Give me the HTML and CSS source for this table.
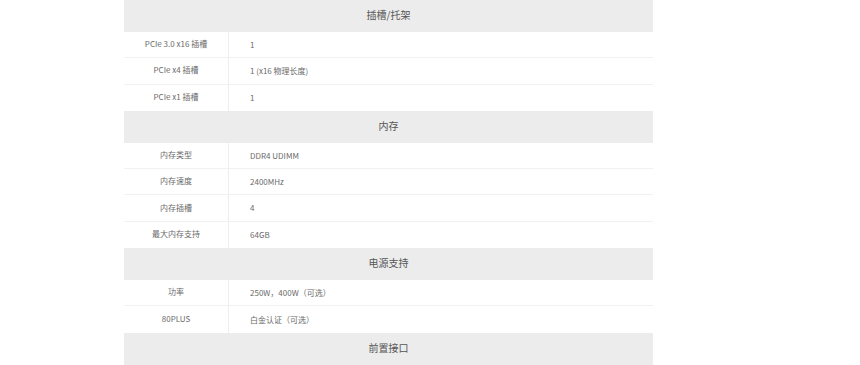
FILE: index.html
```html
<!DOCTYPE html>
<html lang="zh-CN">
<head>
<meta charset="utf-8">
<title>规格</title>
<link rel="stylesheet" href="styles.css">
</head>
<body>
<div class="spec">
  <div class="head">插槽/托架</div>
  <div class="row"><div class="label">PCIe 3.0 x16 插槽</div><div class="value">1</div></div>
  <div class="row"><div class="label">PCIe x4 插槽</div><div class="value">1 (x16 物理长度)</div></div>
  <div class="row last"><div class="label">PCIe x1 插槽</div><div class="value">1</div></div>

  <div class="head">内存</div>
  <div class="row"><div class="label">内存类型</div><div class="value">DDR4 UDIMM</div></div>
  <div class="row"><div class="label">内存速度</div><div class="value">2400MHz</div></div>
  <div class="row"><div class="label">内存插槽</div><div class="value">4</div></div>
  <div class="row last"><div class="label">最大内存支持</div><div class="value">64GB</div></div>

  <div class="head">电源支持</div>
  <div class="row"><div class="label">功率</div><div class="value">250W，400W（可选）</div></div>
  <div class="row last"><div class="label">80PLUS</div><div class="value">白金认证（可选）</div></div>

  <div class="head">前置接口</div>
</div>
</body>
</html>
```

FILE: styles.css
```css
html, body {
  margin: 0;
  padding: 0;
  background: #ffffff;
}

body {
  font-family: "Noto Sans CJK SC", "Noto Sans", "Liberation Sans", sans-serif;
  color: #666666;
}

.spec {
  width: 529px;
  margin-left: 124px;
}

.head {
  height: 32px;
  box-sizing: border-box;
  padding-bottom: 3px;
  background: #ececec;
  color: #555555;
  font-size: 10px;
  display: flex;
  align-items: center;
  justify-content: center;
}

.row {
  display: grid;
  grid-template-columns: 105px 1fr;
  height: 26.3px;
  box-sizing: border-box;
  border-bottom: 1px solid #f1f1f1;
  font-size: 8px;
}

.row.last {
  border-bottom: none;
}

.label {
  display: flex;
  align-items: center;
  justify-content: center;
  padding-bottom: 2px;
  border-right: 1px solid #eeeeee;
  color: #6a6a6a;
}

.value {
  display: flex;
  align-items: center;
  padding-left: 21px;
  padding-bottom: 1px;
  color: #6a6a6a;
}
```
